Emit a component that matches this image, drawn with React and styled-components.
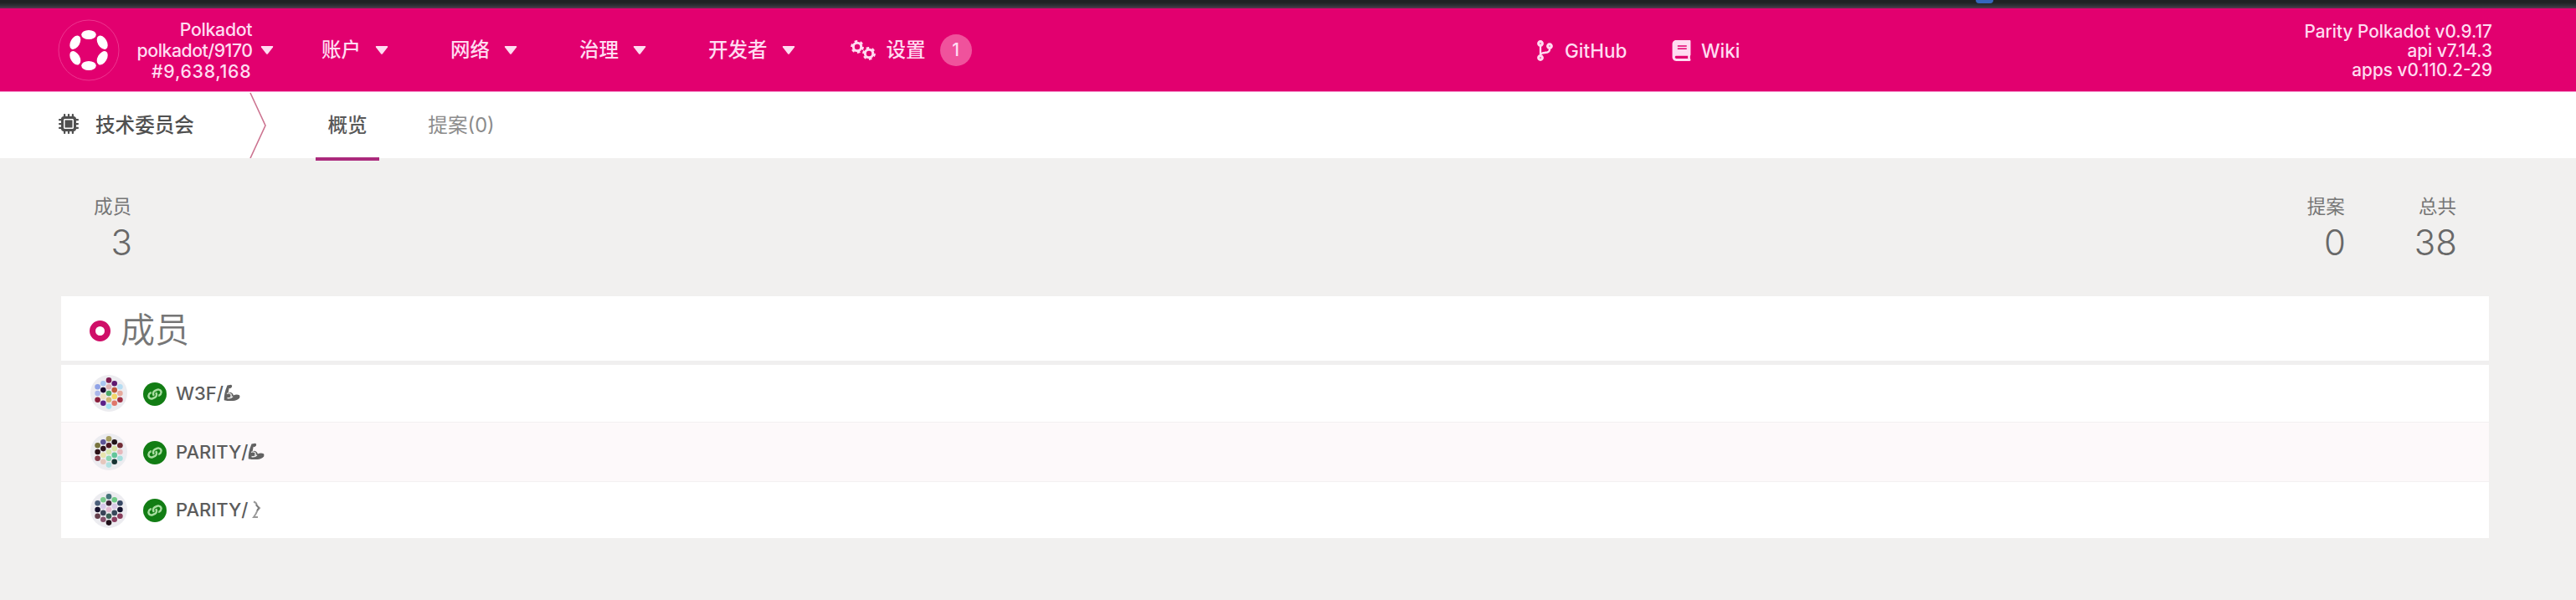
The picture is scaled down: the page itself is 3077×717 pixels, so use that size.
import React from 'react';
import styled, { createGlobalStyle } from 'styled-components';
import { FaCodeBranch, FaBook, FaLink } from 'react-icons/fa';
import { FaMicrochip } from 'react-icons/fa6';

const Global = createGlobalStyle`
  *, *::before, *::after { box-sizing: border-box; }
  html { background: #f1f0ef; }
  body {
    margin: 0;
    background: #f1f0ef;
    color: #4e4e4e;
    font-family: Inter, "Noto Sans CJK SC", sans-serif;
    overflow: hidden;
  }
  svg { display: block; flex: none; }
`;

const Page = styled.div`
  width: 100%;
  height: 717px;
  overflow: hidden;
`;

const WindowEdge = styled.div`
  height: 10px;
  padding-left: 2360px;
  background: linear-gradient(#1f2224, #1f2224 3px, #303338 7px, #5a3650);
`;

const BlueTip = styled.div`
  width: 21px;
  height: 4px;
  border-radius: 0 0 9px 9px;
  background: #3566bd;
`;

const Header = styled.header`
  display: flex;
  align-items: center;
  height: 100px;
  padding: 0 100px 0 69px;
  background: #e2006f;
  border-bottom: 1px solid #f59ad0;
  color: #ffdcf1;
  font-weight: 500;
`;

const Brand = styled.div`
  display: flex;
  align-items: center;
  width: 315px;
`;

const ChainInfo = styled.div`
  width: 158px;
  margin-right: 10px;
  padding-top: 1px;
  font-size: 21.3px;
  line-height: 25px;
  text-align: right;
  white-space: nowrap;
`;

const ChainLine = styled.div`
  margin-right: ${(p) => p.$spacing}px;
  letter-spacing: ${(p) => p.$spacing}px;
`;

const Menu = styled.nav`
  display: flex;
  align-items: center;
  gap: 74px;
  width: 1449px;
  padding-top: 1px;
  font-size: 23.5px;
  line-height: 36px;
  white-space: nowrap;
`;

const MenuItem = styled.div`
  display: flex;
  align-items: center;
  gap: ${(p) => p.$gap || 17}px;
  margin-left: ${(p) => p.$shift || 0}px;
`;

const Badge = styled.span`
  display: grid;
  place-items: center;
  width: 38px;
  height: 38px;
  margin-left: 5px;
  border-radius: 50%;
  background: #f0529c;
  font-size: 21px;
`;

const Links = styled.div`
  display: flex;
  align-items: center;
  padding-top: 1px;
  font-size: 22.5px;
`;

const ExternalLink = styled.a`
  display: flex;
  align-items: center;
  gap: 11px;
  width: 163px;
`;

const Versions = styled.div`
  margin-left: auto;
  padding-top: 2px;
  font-size: 20.8px;
  line-height: 23px;
  text-align: right;
  white-space: nowrap;
`;

const TabBar = styled.div`
  display: flex;
  height: 79px;
  padding-left: 70px;
  background: #fff;
  font-size: 23.6px;
  font-weight: 500;
`;

const Section = styled.div`
  display: flex;
  align-items: center;
  gap: 20px;
  width: 228px;
  padding-bottom: 3px;
  color: #505050;
`;

const Tab = styled.div`
  display: flex;
  align-items: center;
  justify-content: center;
  width: ${(p) => p.$width}px;
  height: 82px;
  margin-left: ${(p) => p.$offset}px;
  padding-bottom: ${(p) => (p.$active ? 2 : 6)}px;
  border-bottom: ${(p) => (p.$active ? '4px solid #ab2a7c' : '0')};
  color: ${(p) => (p.$active ? '#585858' : '#8c8c8c')};
  font-weight: ${(p) => (p.$active ? 500 : 400)};
  white-space: nowrap;
`;

const Summary = styled.section`
  display: flex;
  height: 165px;
  padding: 40px 143px 0 112px;
`;

const Stat = styled.div`
  margin-left: ${(p) => (p.$push ? 'auto' : `${p.$offset || 0}px`)};
  text-align: right;
`;

const StatLabel = styled.div`
  font-size: 22.5px;
  line-height: 36px;
  color: #767676;
`;

const StatValue = styled.div`
  margin-right: -1px;
  font-size: 42px;
  font-weight: 300;
  line-height: 50px;
  color: #686868;
`;

const Table = styled.section`
  margin: 0 104px 0 73px;
  background: #fff;
`;

const TableHead = styled.div`
  display: flex;
  align-items: center;
  gap: 12px;
  height: 82px;
  padding: 0 0 4px 34px;
  border-bottom: 5px solid #f0efef;
`;

const Ring = styled.span`
  width: 25px;
  height: 25px;
  margin-top: 9px;
  border: 7.5px solid #cf0f68;
  border-radius: 50%;
`;

const Title = styled.h1`
  margin: 0;
  font-family: "Noto Sans CJK SC", sans-serif;
  font-size: 41px;
  font-weight: 350;
  line-height: 60px;
  color: #767676;
`;

const Row = styled.div`
  display: flex;
  align-items: center;
  height: ${(p) => p.$height}px;
  padding: 0 0 1px 35px;
  background: ${(p) => (p.$tinted ? '#fdf9fa' : '#fff')};
  border-bottom: ${(p) => (p.$last ? '0' : '1px solid #f3f0f1')};
`;

const Verified = styled.span`
  display: grid;
  place-items: center;
  width: 28px;
  height: 28px;
  margin: 2px 11px 0 19px;
  border-radius: 50%;
  background: #127d14;
  color: #a8dda0;

  svg { transform: rotate(18deg); }
`;

const Name = styled.span`
  display: flex;
  align-items: center;
  gap: ${(p) => p.$gap || 0}px;
  font-size: 22px;
  font-weight: 500;
  line-height: 30px;
  color: #5c5c5c;
`;

const Caret = () => (
  <svg width="16" height="12" viewBox="0 0 16 12">
    <path d="M1.5 1h13q1.3.3.5 1.5L9 10.3q-1 1-2 0L1 2.500Q.2 1.300 1.500 1z" fill="currentColor" />
  </svg>
);

const Logo = () => (
  <svg width="74" height="76" viewBox="-37 -38 74 76">
    <circle r="36" fill="none" stroke="#ee3590" strokeWidth="1" />
    <g fill="#fff">
      <ellipse cy="-18.500" rx="8.800" ry="5.600" />
      <ellipse cy="18.500" rx="8.800" ry="5.600" />
      <ellipse rx="5.500" ry="8.900" transform="translate(16.200 -9.300) rotate(-30)" />
      <ellipse rx="5.500" ry="8.900" transform="translate(-16.200 -9.300) rotate(30)" />
      <ellipse rx="5.500" ry="8.900" transform="translate(16.200 9.300) rotate(30)" />
      <ellipse rx="5.500" ry="8.900" transform="translate(-16.200 9.300) rotate(-30)" />
    </g>
  </svg>
);

const Gears = () => (
  <svg width="31" height="26" viewBox="0 0 31 26" fill="none" stroke="currentColor">
    {[[8, 9], [22, 17]].map(([x, y]) => (
      <g key={x} transform={`translate(${x} ${y})`}>
        <circle r="4.700" strokeWidth="3" />
        <circle r="6.600" strokeWidth="2.600" strokeDasharray="3.450 3.450" />
      </g>
    ))}
  </svg>
);

const Chevron = () => (
  <svg width="20" height="79" viewBox="0 0 20 79">
    <path d="M1 1L19 40L1 79" fill="none" stroke="#cc7390" strokeWidth="1.600" />
  </svg>
);

const Identicon = ({ columns }) => (
  <svg width="44" height="44" viewBox="-22 -22 44 44">
    <circle r="22" fill="#ececf0" />
    {columns.map((colors, c) =>
      colors.map((fill, r) => (
        <circle
          key={`${c}-${r}`}
          cx={(c - 2) * 6.7}
          cy={(r - (colors.length - 1) / 2) * 7.8}
          r="3.300"
          fill={fill}
        />
      ))
    )}
  </svg>
);

const Biceps = () => (
  <svg width="20" height="21" viewBox="0 0 20 21">
    <path
      d="M4.500 1.500L9 .8q1.800.5 1 2.700L8 5.200 6.700 4.800 5.600 10.500q2.800-2 5.200.7 1 1.200 1 2.300 3.500-1.600 7.200-.3.800 1 .2 3.300-3 3.200-8 3.500-6 .3-10.500-.8Q.2 12 4.500 1.500z"
      fill="#626262"
    />
    <path d="M4 11.500q2.500-1.500 5 .8.700 1.600-.5 3.200M4.500 16.500q4 .8 6.500-1.800" fill="none" stroke="#e8e8e8" strokeWidth="1.400" />
  </svg>
);

const Lizard = () => (
  <svg width="12" height="22" viewBox="0 0 12 22">
    <path d="M2 1.500Q6 3 5.500 6L9 9 6.500 12Q5 16 2 20H7" fill="none" stroke="#999" strokeWidth="2" />
    <path d="M5 5l3 4-2 3" fill="none" stroke="#777" strokeWidth="1.500" />
  </svg>
);

const menus = ['账户', '网络', '治理', '开发者'];

const members = [
  {
    name: 'W3F/',
    mark: <Biceps />,
    height: 69,
    columns: [
      ['#8fa2e6', '#a9b6ea', '#8a1f3c'],
      ['#a9c6f0', '#1c0a30', '#efdfc0', '#5c2088'],
      ['#7d1c50', '#dfb4b4', '#4fa968', '#d3b673', '#a6e2f1'],
      ['#601a70', '#c0583c', '#f2d768', '#e0776a'],
      ['#b6dcf2', '#e6aa9c', '#a23044'],
    ],
  },
  {
    name: 'PARITY/',
    mark: <Biceps />,
    height: 71,
    columns: [
      ['#77733d', '#2a1217', '#863e4b'],
      ['#5d5597', '#31151e', '#e7e4ad', '#e5c7bd'],
      ['#a49c5e', '#501824', '#d8e7aa', '#8bd6b0', '#b1e1e1'],
      ['#211318', '#dce4a5', '#62c69a', '#173433'],
      ['#702c35', '#e6b9bc', '#a6dedc'],
    ],
  },
  {
    name: 'PARITY/',
    mark: <Lizard />,
    gap: 5,
    height: 67,
    columns: [
      ['#4b607a', '#17122d', '#633e4a'],
      ['#79c98c', '#d6c8e8', '#394357', '#86516c'],
      ['#447179', '#3d2336', '#e5b9d0', '#3c6054', '#201019'],
      ['#6fc987', '#d9c8e6', '#38485a', '#8a3f60'],
      ['#384965', '#15132d', '#893e5c'],
    ],
  },
];

export default function App() {
  return (
    <Page>
      <Global />
      <WindowEdge><BlueTip /></WindowEdge>
      <Header>
        <Brand>
          <Logo />
          <ChainInfo>
            <ChainLine $spacing={-0.3}>Polkadot</ChainLine>
            <ChainLine $spacing={-0.5}>polkadot/9170</ChainLine>
            <ChainLine $spacing={0.7}>#9,638,168</ChainLine>
          </ChainInfo>
          <Caret />
        </Brand>
        <Menu>
          {menus.map((label) => (
            <MenuItem key={label}>{label}<Caret /></MenuItem>
          ))}
          <MenuItem $gap={12} $shift={-8}>
            <Gears />
            设置
            <Badge>1</Badge>
          </MenuItem>
        </Menu>
        <Links>
          <ExternalLink><FaCodeBranch size={25} />GitHub</ExternalLink>
          <ExternalLink><FaBook size={25} />Wiki</ExternalLink>
        </Links>
        <Versions>
          <div>Parity Polkadot v0.9.17</div>
          <div>api v7.14.3</div>
          <div>apps v0.110.2-29</div>
        </Versions>
      </Header>
      <TabBar>
        <Section><FaMicrochip size={24} />技术委员会</Section>
        <Chevron />
        <Tab $width={76} $offset={59} $active>概览</Tab>
        <Tab $width={80} $offset={58}>提案(0)</Tab>
      </TabBar>
      <Summary>
        <Stat><StatLabel>成员</StatLabel><StatValue>3</StatValue></Stat>
        <Stat $push><StatLabel>提案</StatLabel><StatValue>0</StatValue></Stat>
        <Stat $offset={83}><StatLabel>总共</StatLabel><StatValue>38</StatValue></Stat>
      </Summary>
      <Table>
        <TableHead><Ring /><Title>成员</Title></TableHead>
        {members.map((m, i) => (
          <Row key={i} $height={m.height} $tinted={i === 1} $last={i === members.length - 1}>
            <Identicon columns={m.columns} />
            <Verified><FaLink size={16} /></Verified>
            <Name $gap={m.gap}>{m.name}{m.mark}</Name>
          </Row>
        ))}
      </Table>
    </Page>
  );
}
